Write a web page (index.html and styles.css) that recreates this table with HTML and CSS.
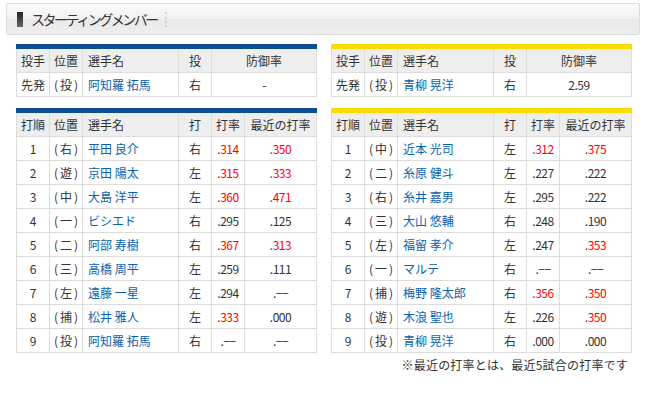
FILE: index.html
```html
<!DOCTYPE html>
<html lang="ja">
<head>
<meta charset="utf-8">
<link rel="stylesheet" href="styles.css">
</head>
<body>
<div class="wrap">
  <div class="title-box">
    <span class="title-icon"></span>
    <h2 class="title-text">スターティングメンバー</h2>
    <span class="title-sep"></span>
  </div>

  <div class="pair">
    <table class="tbl dragons">
      <colgroup><col class="c1"><col class="c2"><col class="c3"><col class="c4"><col class="c5w"></colgroup>
      <tr class="head"><th>投手</th><th>位置</th><th class="left">選手名</th><th>投</th><th>防御率</th></tr>
      <tr><td>先発</td><td class="pos">(投)</td><td class="name">阿知羅 拓馬</td><td>右</td><td class="num">-</td></tr>
    </table>
    <table class="tbl tigers">
      <colgroup><col class="c1"><col class="c2"><col class="c3"><col class="c4"><col class="c5w"></colgroup>
      <tr class="head"><th>投手</th><th>位置</th><th class="left">選手名</th><th>投</th><th>防御率</th></tr>
      <tr><td>先発</td><td class="pos">(投)</td><td class="name">青柳 晃洋</td><td>右</td><td class="num">2.59</td></tr>
    </table>
  </div>

  <div class="pair second">
    <table class="tbl dragons">
      <colgroup><col class="c1"><col class="c2"><col class="c3"><col class="c4"><col class="c5"><col class="c6"></colgroup>
      <tr class="head"><th>打順</th><th>位置</th><th class="left">選手名</th><th>打</th><th>打率</th><th>最近の打率</th></tr>
      <tr><td>1</td><td class="pos">(右)</td><td class="name">平田 良介</td><td>右</td><td class="num red">.314</td><td class="num red">.350</td></tr>
      <tr><td>2</td><td class="pos">(遊)</td><td class="name">京田 陽太</td><td>左</td><td class="num red">.315</td><td class="num red">.333</td></tr>
      <tr><td>3</td><td class="pos">(中)</td><td class="name">大島 洋平</td><td>左</td><td class="num red">.360</td><td class="num red">.471</td></tr>
      <tr><td>4</td><td class="pos">(一)</td><td class="name">ビシエド</td><td>右</td><td class="num">.295</td><td class="num">.125</td></tr>
      <tr><td>5</td><td class="pos">(二)</td><td class="name">阿部 寿樹</td><td>右</td><td class="num red">.367</td><td class="num red">.313</td></tr>
      <tr><td>6</td><td class="pos">(三)</td><td class="name">高橋 周平</td><td>左</td><td class="num">.259</td><td class="num">.111</td></tr>
      <tr><td>7</td><td class="pos">(左)</td><td class="name">遠藤 一星</td><td>左</td><td class="num">.294</td><td class="num">.−−</td></tr>
      <tr><td>8</td><td class="pos">(捕)</td><td class="name">松井 雅人</td><td>左</td><td class="num red">.333</td><td class="num">.000</td></tr>
      <tr><td>9</td><td class="pos">(投)</td><td class="name">阿知羅 拓馬</td><td>右</td><td class="num">.−−</td><td class="num">.−−</td></tr>
    </table>
    <table class="tbl tigers">
      <colgroup><col class="c1"><col class="c2"><col class="c3"><col class="c4"><col class="c5"><col class="c6"></colgroup>
      <tr class="head"><th>打順</th><th>位置</th><th class="left">選手名</th><th>打</th><th>打率</th><th>最近の打率</th></tr>
      <tr><td>1</td><td class="pos">(中)</td><td class="name">近本 光司</td><td>左</td><td class="num red">.312</td><td class="num red">.375</td></tr>
      <tr><td>2</td><td class="pos">(二)</td><td class="name">糸原 健斗</td><td>左</td><td class="num">.227</td><td class="num">.222</td></tr>
      <tr><td>3</td><td class="pos">(右)</td><td class="name">糸井 嘉男</td><td>左</td><td class="num">.295</td><td class="num">.222</td></tr>
      <tr><td>4</td><td class="pos">(三)</td><td class="name">大山 悠輔</td><td>右</td><td class="num">.248</td><td class="num">.190</td></tr>
      <tr><td>5</td><td class="pos">(左)</td><td class="name">福留 孝介</td><td>左</td><td class="num">.247</td><td class="num red">.353</td></tr>
      <tr><td>6</td><td class="pos">(一)</td><td class="name">マルテ</td><td>右</td><td class="num">.−−</td><td class="num">.−−</td></tr>
      <tr><td>7</td><td class="pos">(捕)</td><td class="name">梅野 隆太郎</td><td>右</td><td class="num red">.356</td><td class="num red">.350</td></tr>
      <tr><td>8</td><td class="pos">(遊)</td><td class="name">木浪 聖也</td><td>左</td><td class="num">.226</td><td class="num red">.350</td></tr>
      <tr><td>9</td><td class="pos">(投)</td><td class="name">青柳 晃洋</td><td>右</td><td class="num">.000</td><td class="num">.000</td></tr>
    </table>
  </div>

  <p class="note">※最近の打率とは、最近5試合の打率です</p>
</div>
</body>
</html>
```

FILE: styles.css
```css
html, body {
  margin: 0;
  padding: 0;
  background: #fff;
}
body {
  font-family: "Noto Sans CJK JP", "Noto Sans", sans-serif;
  color: #333;
  font-size: 12px;
}
.wrap {
  width: 634px;
  margin: 3px 0 0 6px;
}
.title-box {
  box-sizing: border-box;
  height: 32px;
  border: 1px solid #dcdcdc;
  border-radius: 2px;
  background: linear-gradient(#fbfbfb, #f1f1f1 50%, #e9e9e9 50%, #eeeeee);
  display: flex;
  align-items: center;
  padding-left: 10px;
}
.title-icon {
  width: 6px;
  height: 15px;
  background: linear-gradient(#222, #666);
  margin-right: 8px;
}
.title-text {
  margin: 0;
  font-size: 14px;
  font-weight: normal;
  letter-spacing: -2.5px;
  color: #333;
  line-height: 1;
}
.title-sep {
  width: 0;
  height: 15px;
  border-left: 2px dotted #cfcfcf;
  margin-left: 8px;
}
.pair {
  display: flex;
  gap: 14px;
  padding: 0 10px;
  margin-top: 9px;
  align-items: flex-start;
}
.pair.second {
  margin-top: 11px;
}
.tbl {
  width: 300px;
  table-layout: fixed;
  border-collapse: collapse;
}
.tbl.dragons { border-top: 5px solid #0d4d90; }
.tbl.tigers { border-top: 5px solid #ffdc00; }
.c1, .c2, .c4, .c5 { width: 33px; }
.c3 { width: 96px; }
.c5w { width: 105px; }
.c6 { width: 72px; }
.tbl th, .tbl td {
  border: 1px solid #dddddd;
  height: 23px;
  padding: 0;
  text-align: center;
  font-weight: normal;
  white-space: nowrap;
  overflow: hidden;
  font-size: 12px;
  line-height: 14px;
}
.tbl th {
  background: #eeeeee;
}
.tbl th.left { text-align: left; padding-left: 5px; }
.tbl td.pos { letter-spacing: 2px; text-indent: 2px; }
.tbl td.name {
  text-align: left;
  padding-left: 5px;
  color: #0a63ad;
}
.tbl td.num { font-size: 12px; letter-spacing: -0.5px; }
.tbl td.red { color: #ff0000; }
.note {
  margin: 3px 0 0;
  padding-right: 12px;
  text-align: right;
  font-size: 12px;
  letter-spacing: 0.2px;
  color: #333;
}
```
